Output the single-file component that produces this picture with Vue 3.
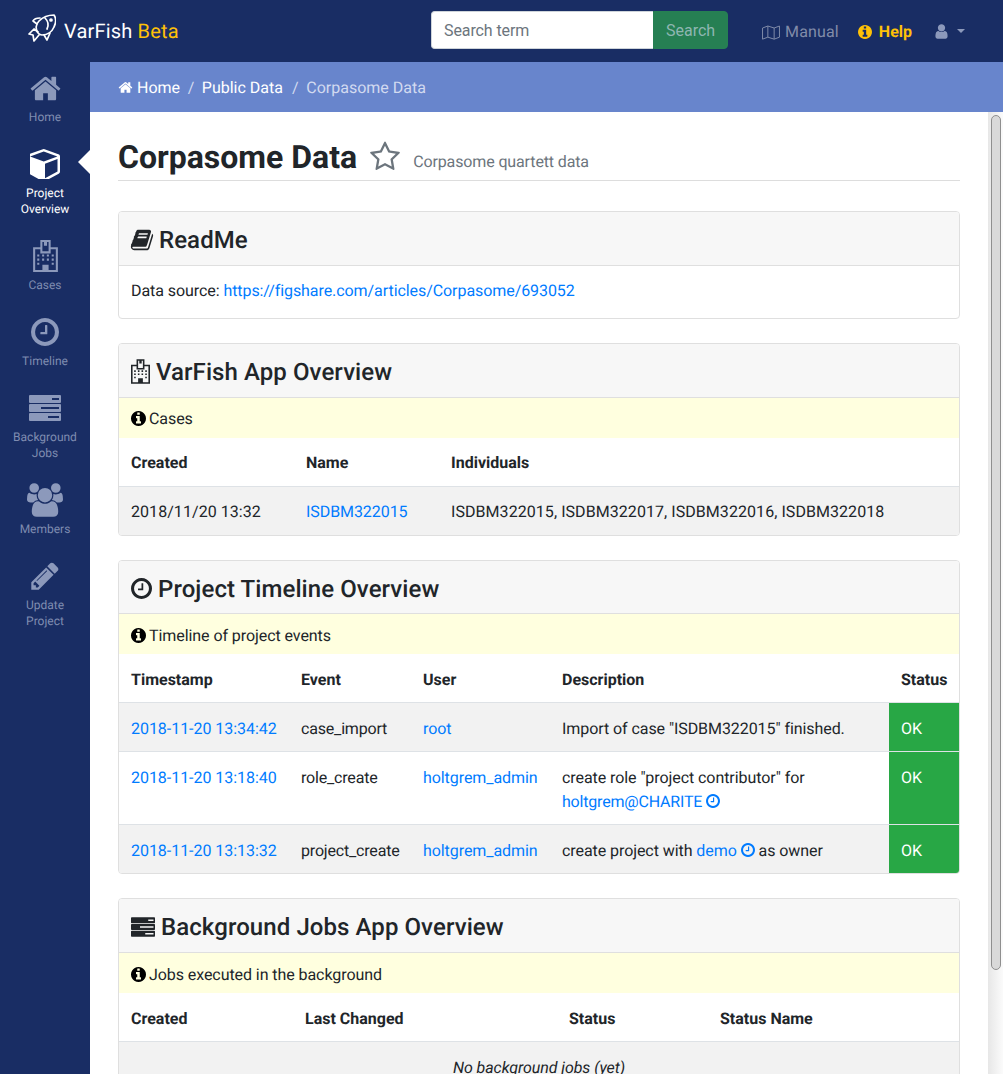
<script setup>
const icons = {
  home: 'M1472 992v480q0 26-19 45t-45 19h-384v-384h-256v384h-384q-26 0-45-19t-19-45v-480q0-1 .5-3t.5-3l575-474 575 474q1 2 1 6zm223-69l-62 74q-8 9-21 11h-3q-13 0-21-7l-692-577-692 577q-12 8-24 7-13-2-21-11l-62-74q-8-10-7-23.500t11-21.500l719-599q32-26 76-26t76 26l244 204v-195q0-14 9-23t23-9h192q14 0 23 9t9 23v408l219 182q10 8 11 21.500t-7 23.500z',
  cube: 'M896 1629l640-349v-636l-640 233v752zm-64-865l698-254-698-254-698 254zm832-252v768q0 35-18 65t-49 47l-704 384q-28 16-61 16t-61-16l-704-384q-31-17-49-47t-18-65v-768q0-40 23-73t61-47l704-256q22-8 44-8t44 8l704 256q38 14 61 47t23 73z',
  clock: 'M1024 544v448q0 14-9 23t-23 9h-320q-14 0-23-9t-9-23v-64q0-14 9-23t23-9h224v-352q0-14 9-23t23-9h64q14 0 23 9t9 23zm416 352q0-148-73-273t-198-198-273-73-273 73-198 198-73 273 73 273 198 198 273 73 273-73 198-198 73-273zm224 0q0 209-103 385.500t-279.500 279.500-385.500 103-385.500-103-279.500-279.500-103-385.500 103-385.500 279.500-279.500 385.500-103 385.500 103 279.500 279.500 103 385.500z',
  info: 'M1152 1376v-160q0-14-9-23t-23-9h-96v-512q0-14-9-23t-23-9h-320q-14 0-23 9t-9 23v160q0 14 9 23t23 9h96v320h-96q-14 0-23 9t-9 23v160q0 14 9 23t23 9h448q14 0 23-9t9-23zm-128-896v-160q0-14-9-23t-23-9h-192q-14 0-23 9t-9 23v160q0 14 9 23t23 9h192q14 0 23-9t9-23zm640 416q0 209-103 385.500t-279.500 279.500-385.500 103-385.500-103-279.500-279.500-103-385.500 103-385.500 279.500-279.500 385.500-103 385.500 103 279.500 279.500 103 385.500z',
  user: 'M1536 1399q0 109-62.500 187t-150.500 78h-854q-88 0-150.500-78t-62.500-187q0-85 8.500-160.500t31.500-152 58.500-131 94-89 134.500-34.500q131 128 313 128t313-128q76 0 134.500 34.500t94 89 58.500 131 31.500 152 8.500 160.500zm-256-887q0 159-112.500 271.500t-271.500 112.500-271.500-112.500-112.500-271.500 112.500-271.500 271.500-112.500 271.500 112.500 112.500 271.500z',
  pencil: 'M491 1536l91-91-235-235-91 91v107h128v128h107zm523-928q0-22-22-22-10 0-17 7l-542 542q-7 7-7 17 0 22 22 22 10 0 17-7l542-542q7-7 7-17zm-54-192l416 416-832 832h-416v-416zm683 96q0 53-37 90l-166 166-416-416 166-165q36-38 90-38 53 0 91 38l235 234q37 39 37 91z',
  users: 'M593 896q-162 5-265 128h-134q-82 0-138-40.500t-56-118.500q0-353 124-353 6 0 43.500 21t97.500 42.500 119 21.500q67 0 133-23-5 37-5 66 0 139 81 256zm1071 637q0 120-73 189.500t-194 69.500h-874q-121 0-194-69.500t-73-189.500q0-53 3.500-103.500t14-109 26.500-108.500 43-97.500 62-81 85.500-53.500 111.500-20q10 0 43 21.500t73 48 107 48 135 21.500 135-21.500 107-48 73-48 43-21.500q61 0 111.500 20t85.500 53.500 62 81 43 97.500 26.500 108.500 14 109 3.500 103.500zm-1024-1277q0 106-75 181t-181 75-181-75-75-181 75-181 181-75 181 75 75 181zm704 384q0 159-112.500 271.500t-271.500 112.500-271.500-112.500-112.500-271.500 112.500-271.500 271.500-112.500 271.500 112.500 112.500 271.500zm576 225q0 78-56 118.500t-138 40.500h-134q-103-123-265-128 81-117 81-256 0-29-5-66 66 23 133 23 59 0 119-21.500t97.500-42.500 43.500-21q124 0 124 353zm-128-609q0 106-75 181t-181 75-181-75-75-181 75-181 181-75 181 75 75 181z',
  book: 'M1703 478q40 57 18 129l-275 906q-19 64-76.500 107.500t-122.500 43.500h-923q-77 0-148.500-53.500t-99.500-131.500q-24-67-2-127 0-4 3-27t4-37q1-8-3-21.500t-3-19.500q2-11 8-21t16.500-23.500 16.500-23.500q23-38 45-91.500t30-91.500q3-10 .5-30t-.5-28q3-11 17-28t17-23q21-36 42-92t25-90q1-9-2.500-32t.5-28q4-13 22-30.500t22-22.500q19-26 42.500-84.500t27.500-96.500q1-8-3-25.500t-2-26.500q2-8 9-18t18-23 17-21q8-12 16.500-30.500t15-35 16-36 19.500-32 26.500-23.500 36-11.500 47.500 5.500l-1 3q38-9 51-9h761q74 0 114 56t18 130l-274 906q-36 119-71.500 153.500t-128.500 34.500h-869q-27 0-38 15-11 16-1 43 24 70 144 70h923q29 0 56-15.500t35-41.500l300-987q7-22 5-57 38 15 59 43zm-1064 2q-4 13 2 22.500t20 9.500h608q13 0 25.500-9.500t16.500-22.500l21-64q4-13-2-22.500t-20-9.500h-608q-13 0-25.500 9.500t-16.500 22.500zm-83 256q-4 13 2 22.500t20 9.500h608q13 0 25.500-9.500t16.500-22.500l21-64q4-13-2-22.500t-20-9.500h-608q-13 0-25.500 9.500t-16.500 22.500z',
  star: 'M1201 1004l306-297-422-62-189-382-189 382-422 62 306 297-73 421 378-199 377 199zm527-357q0 22-26 48l-363 354 86 500q1 7 1 20 0 50-41 50-19 0-40-12l-449-236-449 236q-22 12-40 12-21 0-31.500-14.500t-10.500-35.500q0-6 2-20l86-500-364-354q-25-27-25-48 0-37 56-46l502-73 225-455q19-41 49-41t49 41l225 455 502 73q56 9 56 46z',
  hospital: 'M7 0h10v7h7v24H0V7h7zM9 2v9h6V2h-1.500v3.500h-3V2zM2 9v20h7v-5h6v5h7V9h-5v4H7V9zM4 14h2v2H4zm4.700 0h2v2h-2zm4.600 0h2v2h-2zm4.700 0h2v2h-2zM4 18h2v2H4zm4.700 0h2v2h-2zm4.600 0h2v2h-2zm4.700 0h2v2h-2zM4 22h2v2H4zm14 0h2v2h-2z',
  server: 'M1 0h30a1 1 0 0 1 1 1v6a1 1 0 0 1-1 1H1a1 1 0 0 1-1-1V1a1 1 0 0 1 1-1zm22 3v2h7V3zM1 9h30a1 1 0 0 1 1 1v6a1 1 0 0 1-1 1H1a1 1 0 0 1-1-1v-6a1 1 0 0 1 1-1zm11 3v2h18v-2zM1 18h30a1 1 0 0 1 1 1v6a1 1 0 0 1-1 1H1a1 1 0 0 1-1-1v-6a1 1 0 0 1 1-1zm18 3v2h11v-2z'
}

const GLYPH_BOX = '128 128 1536 1536'

const navItems = [
  { label: ['Home'], icon: 'home', box: '0 0 1792 1792', width: 33, height: 33 },
  { label: ['Project', 'Overview'], icon: 'cube', box: GLYPH_BOX, width: 30, height: 30 },
  { label: ['Cases'], icon: 'hospital', box: '0 0 24 31', width: 25, height: 32 },
  { label: ['Timeline'], icon: 'clock', box: GLYPH_BOX, width: 28, height: 28 },
  { label: ['Background', 'Jobs'], icon: 'server', box: '0 0 32 26', width: 32, height: 26 },
  { label: ['Members'], icon: 'users', box: '0 0 1920 1792', width: 36, height: 34 },
  { label: ['Update', 'Project'], icon: 'pencil', box: '0 0 1792 1792', width: 32, height: 32 }
]

const cases = [
  { created: '2018/11/20 13:32', name: 'ISDBM322015', individuals: 'ISDBM322015, ISDBM322017, ISDBM322016, ISDBM322018' }
]
</script>

<template>
  <div class="app">
    <header class="topbar">
      <a class="brand">
        <svg class="fish" viewBox="0 0 28 28" fill="none" stroke="#fff" stroke-width="1.7" stroke-linejoin="round" stroke-linecap="round">
          <path d="M10 19C7 15 8 10 11 7 15 3 21 1 26 1c2 3 2 8 0 12-2 5-7 8-12 8-1.500 0-3-1-4-2z" />
          <path d="M10 18L6 15 1 20l4 1 1 6 5-6" />
          <path d="M9 10L5 7c1-2 4-3 7-3" />
          <path d="M16 21l3 5 3-7" />
          <path d="M17 4c3 3 4 7 2 11" />
          <circle cx="23" cy="6" r="1" />
        </svg>
        <span>VarFish <span class="beta">Beta</span></span>
      </a>
      <form class="search" @submit.prevent>
        <input type="text" placeholder="Search term" />
        <button type="submit">Search</button>
      </form>
      <nav class="top-links">
        <a class="manual">
          <svg class="map" viewBox="0 0 20 16" fill="none" stroke="currentColor" stroke-width="1.100" stroke-linejoin="round">
            <path d="M.6 3L6.500.8l7 2.200L19.400.8v12.400l-5.900 2.200-7-2.200L.6 15.400zM6.500.8v12.400M13.500 3v12.400" />
          </svg>
          Manual
        </a>
        <a class="help">
          <svg :viewBox="GLYPH_BOX" class="ico-help"><path fill="currentColor" :d="icons.info" /></svg>
          Help
        </a>
        <a class="account">
          <svg viewBox="0 0 1792 1792" class="ico-user"><path fill="currentColor" :d="icons.user" /></svg>
          <i class="caret"></i>
        </a>
      </nav>
    </header>

    <div class="below">
      <aside class="sidebar">
        <a v-for="item in navItems" :key="item.icon" class="side-item">
          <span class="side-icon">
            <svg :viewBox="item.box" :width="item.width" :height="item.height"><path fill="currentColor" fill-rule="evenodd" :d="icons[item.icon]" /></svg>
          </span>
          <span v-for="line in item.label" :key="line" class="side-label">{{ line }}</span>
        </a>
      </aside>

      <div class="page">
        <ol class="crumbs">
          <li>
            <svg viewBox="0 0 1792 1792" class="ico-home"><path fill="currentColor" :d="icons.home" /></svg>
            Home
          </li>
          <li class="sep">/</li>
          <li>Public Data</li>
          <li class="sep last">/</li>
          <li class="current">Corpasome Data</li>
        </ol>

        <div class="scroller">
          <main class="content">
            <div class="title-row">
              <h2>Corpasome Data</h2>
              <svg viewBox="0 0 1792 1792" class="ico-star"><path fill="currentColor" :d="icons.star" /></svg>
              <span class="subtitle">Corpasome quartett data</span>
            </div>

            <section class="card">
              <h4 class="card-head">
                <svg viewBox="0 0 1792 1792" class="head-ico book"><path fill="currentColor" :d="icons.book" /></svg>
                ReadMe
              </h4>
              <div class="card-body">
                Data source: <a class="link">https://figshare.com/articles/Corpasome/693052</a>
              </div>
            </section>

            <section class="card">
              <h4 class="card-head">
                <svg viewBox="0 0 24 31" class="head-ico hosp"><path fill="currentColor" fill-rule="evenodd" :d="icons.hospital" /></svg>
                VarFish App Overview
              </h4>
              <div class="note">
                <svg :viewBox="GLYPH_BOX" class="ico-info"><path fill="currentColor" :d="icons.info" /></svg>
                Cases
              </div>
              <table>
                <colgroup><col class="w175" /><col class="w145" /><col /></colgroup>
                <thead><tr><th>Created</th><th>Name</th><th>Individuals</th></tr></thead>
                <tbody>
                  <tr v-for="c in cases" :key="c.name" class="odd">
                    <td class="digits">{{ c.created }}</td>
                    <td><a class="link">{{ c.name }}</a></td>
                    <td class="digits">{{ c.individuals }}</td>
                  </tr>
                </tbody>
              </table>
            </section>

            <section class="card shifted">
              <h4 class="card-head short">
                <svg :viewBox="GLYPH_BOX" class="head-ico clock"><path fill="currentColor" :d="icons.clock" /></svg>
                Project Timeline Overview
              </h4>
              <div class="note">
                <svg :viewBox="GLYPH_BOX" class="ico-info"><path fill="currentColor" :d="icons.info" /></svg>
                Timeline of project events
              </div>
              <table>
                <colgroup>
                  <col class="w170" /><col class="w122" /><col class="w139" /><col class="w339" /><col />
                </colgroup>
                <thead>
                  <tr><th>Timestamp</th><th>Event</th><th>User</th><th>Description</th><th>Status</th></tr>
                </thead>
                <tbody>
                  <tr class="odd">
                    <td class="nowrap"><a class="link">2018-11-20 13:34:42</a></td>
                    <td class="event">case_import</td>
                    <td><a class="link">root</a></td>
                    <td>Import of case "ISDBM322015" finished.</td>
                    <td class="ok">OK</td>
                  </tr>
                  <tr>
                    <td class="nowrap"><a class="link">2018-11-20 13:18:40</a></td>
                    <td class="event">role_create</td>
                    <td><a class="link">holtgrem_admin</a></td>
                    <td>create role "project contributor" for <a class="link tight">holtgrem@CHARITE <svg :viewBox="GLYPH_BOX" class="ico-inline"><path fill="currentColor" :d="icons.clock" /></svg></a></td>
                    <td class="ok">OK</td>
                  </tr>
                  <tr class="odd">
                    <td class="nowrap"><a class="link">2018-11-20 13:13:32</a></td>
                    <td class="event">project_create</td>
                    <td><a class="link">holtgrem_admin</a></td>
                    <td>create project with <a class="link">demo <svg :viewBox="GLYPH_BOX" class="ico-inline"><path fill="currentColor" :d="icons.clock" /></svg></a> as owner</td>
                    <td class="ok">OK</td>
                  </tr>
                </tbody>
              </table>
            </section>

            <section class="card shifted">
              <h4 class="card-head">
                <svg viewBox="0 0 32 26" class="head-ico srv"><path fill="currentColor" fill-rule="evenodd" :d="icons.server" /></svg>
                Background Jobs App Overview
              </h4>
              <div class="note">
                <svg :viewBox="GLYPH_BOX" class="ico-info"><path fill="currentColor" :d="icons.info" /></svg>
                Jobs executed in the background
              </div>
              <table>
                <colgroup>
                  <col class="w174" /><col class="w264" /><col class="w151" /><col />
                </colgroup>
                <thead>
                  <tr><th>Created</th><th>Last Changed</th><th>Status</th><th>Status Name</th></tr>
                </thead>
                <tbody>
                  <tr class="odd"><td colspan="4" class="empty">No background jobs (yet)</td></tr>
                </tbody>
              </table>
            </section>
          </main>
          <div class="scrollbar"><div class="thumb"></div></div>
        </div>
      </div>
    </div>
  </div>
</template>

<style>
html, body { margin: 0; height: 100%; overflow: hidden; }
</style>

<style scoped>
.app {
  height: 1074px;
  display: flex;
  flex-direction: column;
  font-family: Roboto, "Liberation Sans", sans-serif;
  font-size: 16px;
  line-height: 24px;
  color: #212529;
  background: #fff;
  text-rendering: geometricPrecision;
}

.topbar {
  flex: 0 0 62px;
  display: flex;
  align-items: center;
  background: #192d64;
  padding: 0 38px 0 28px;
}
.brand { display: flex; align-items: center; gap: 8px; color: #fff; font-size: 20px; padding-bottom: 1px; letter-spacing: .17px; }
.brand .beta { color: #ffc107; }
.fish { width: 28px; height: 28px; margin-top: -5px; }

.search { display: flex; height: 38px; margin: 0 34px 2px auto; }
.search input {
  width: 222px;
  box-sizing: border-box;
  border: 1px solid #ced4da;
  border-right: 0;
  border-radius: 4px 0 0 4px;
  padding: 8px 12px 6px;
  font: inherit;
  letter-spacing: -.1px;
  color: #495057;
  background: #fff;
  outline: none;
}
.search input::placeholder { color: #6c757d; opacity: 1; }
.search button {
  width: 75px;
  border: 1px solid #267f53;
  border-radius: 0 4px 4px 0;
  background: #267f53;
  color: #8fb6b1;
  font: inherit;
  padding: 2px 0 0;
}

.top-links { display: flex; align-items: center; padding-top: 2px; }
.manual { display: flex; align-items: center; gap: 5px; color: #818ca9; letter-spacing: .15px; }
.map { width: 18px; height: 15px; }
.help { display: flex; align-items: center; gap: 7px; margin-left: 19px; color: #ffc107; font-weight: 700; }
.ico-help { width: 14px; height: 14px; }
.account { display: flex; align-items: center; margin-left: 21.4px; color: #8c99bb; }
.ico-user { width: 17px; height: 17px; margin-bottom: 2px; }
.caret {
  margin-left: 6.6px;
  border-top: 4.8px solid #8c99bb;
  border-left: 4.8px solid transparent;
  border-right: 4.8px solid transparent;
  margin-top: -3px;
}

.below { flex: 1; display: flex; min-height: 0; }

.sidebar { flex: 0 0 90px; background: #192d64; }
.side-item {
  position: relative;
  display: flex;
  flex-direction: column;
  align-items: center;
  padding: 8px 0 13px;
  color: #8c99bb;
  text-align: center;
}
.side-icon { height: 36px; margin-bottom: 3px; display: flex; align-items: center; justify-content: center; }
.side-label { font-size: 12px; line-height: 16px; color: #7f8cb0; }
.side-item:nth-child(2), .side-item:nth-child(2) .side-label { color: #fff; }
.side-item:nth-child(2)::after {
  content: "";
  position: absolute;
  right: 0;
  top: 12px;
  border: 12px solid transparent;
  border-right-color: #fff;
  border-left-width: 0;
}

.page { flex: 1; min-width: 0; display: flex; flex-direction: column; }

.crumbs {
  flex: 0 0 50px;
  box-sizing: border-box;
  display: flex;
  align-items: center;
  gap: 7.6px;
  margin: 0;
  padding: 2px 0 0 28px;
  list-style: none;
  background: #6885cc;
  color: #fff;
}
.crumbs .sep, .crumbs .current { color: #d2daf0; }
.crumbs .sep.last { margin-left: 1.5px; }
.ico-home { width: 15px; height: 15px; vertical-align: -2px; }

.scroller { flex: 1; min-height: 0; display: flex; }
.content {
  flex: 1;
  min-width: 0;
  overflow: hidden;
  padding: 0 28px;
  letter-spacing: -.07px;
}
.scrollbar {
  flex: 0 0 15px;
  box-sizing: border-box;
  padding: 3px 2px 0 3px;
  background: linear-gradient(90deg, #e7e7e7, #fbfbfb);
}
.thumb {
  height: 855px;
  box-sizing: border-box;
  background: #d9d9d9;
  border: 1px solid #8f8f8f;
  border-radius: 5px;
}

.title-row {
  display: flex;
  align-items: center;
  height: 68px;
  border-bottom: 1px solid #ddd;
  margin-bottom: 30px;
}
.title-row h2 { margin: 22px 0 0; font-size: 32px; line-height: 44px; font-weight: 700; letter-spacing: 0; }
.ico-star { width: 32px; height: 32px; margin: 22px 0 0 12px; color: #6c757d; }
.subtitle { margin: 32px 0 0 12px; color: #6c757d; letter-spacing: -.13px; }

.card {
  border: 1px solid #dfdfdf;
  border-radius: 4px;
  overflow: hidden;
  margin-bottom: 24px;
}
.card-head {
  box-sizing: border-box;
  display: flex;
  align-items: center;
  gap: 6px;
  margin: 0;
  height: 54px;
  padding: 4px 12px 0;
  background: #f7f7f7;
  border-bottom: 1px solid #dfdfdf;
  font-size: 24px;
  font-weight: 500;
  line-height: 29px;
  letter-spacing: .08px;
}
.card-head.short { height: 53px; padding-top: 5px; }
.head-ico { width: 22px; height: 22px; }
.head-ico.book { width: 24px; height: 24px; margin: 0 -1px 2px -1px; }
.head-ico.clock { width: 21px; height: 21px; margin-bottom: 2px; }
.head-ico.hosp { width: 19px; height: 25px; margin-bottom: 2px; }
.head-ico.srv { width: 24px; height: 20px; margin-bottom: 2px; }
.card-body { padding: 13px 12px 15px; height: 24px; }

.note {
  box-sizing: border-box;
  display: flex;
  align-items: center;
  gap: 3px;
  height: 40px;
  padding: 2px 12px 0;
  background: #ffffdf;
}
.shifted .note { padding-top: 4px; }
.ico-info { width: 15px; height: 15px; color: #000; margin-bottom: 2px; }

.w175 { width: 175px; }
.w145 { width: 145px; }
.w170 { width: 170px; }
.w122 { width: 122px; }
.w139 { width: 139px; }
.w339 { width: 339px; }
.w174 { width: 174px; }
.w264 { width: 264px; }
.w151 { width: 151px; }

table { width: 100%; table-layout: fixed; border-collapse: collapse; }
th, td { padding: 13px 12px 11px; text-align: left; vertical-align: top; border-top: 1px solid #dee2e6; }
.shifted th, .shifted td { padding: 14px 12px 10px; }
thead th { border-top: 0; font-weight: 700; border-bottom: 1px solid #dee2e6; letter-spacing: 0; }
tbody tr:first-child td { border-top: 0; }
tr.odd td { background: #f2f2f2; }
td.ok { background: #28a745; color: #fff; }
tr.odd td.ok { background: #28a745; }
td.nowrap { white-space: nowrap; letter-spacing: -.04px; }
td.digits { letter-spacing: .06px; }
td.event { letter-spacing: -.18px; }
.link.tight { letter-spacing: -.19px; }
.empty { text-align: center; font-style: italic; }
.link { color: #007bff; }
.ico-inline { width: 14px; height: 14px; vertical-align: -1px; }
</style>
